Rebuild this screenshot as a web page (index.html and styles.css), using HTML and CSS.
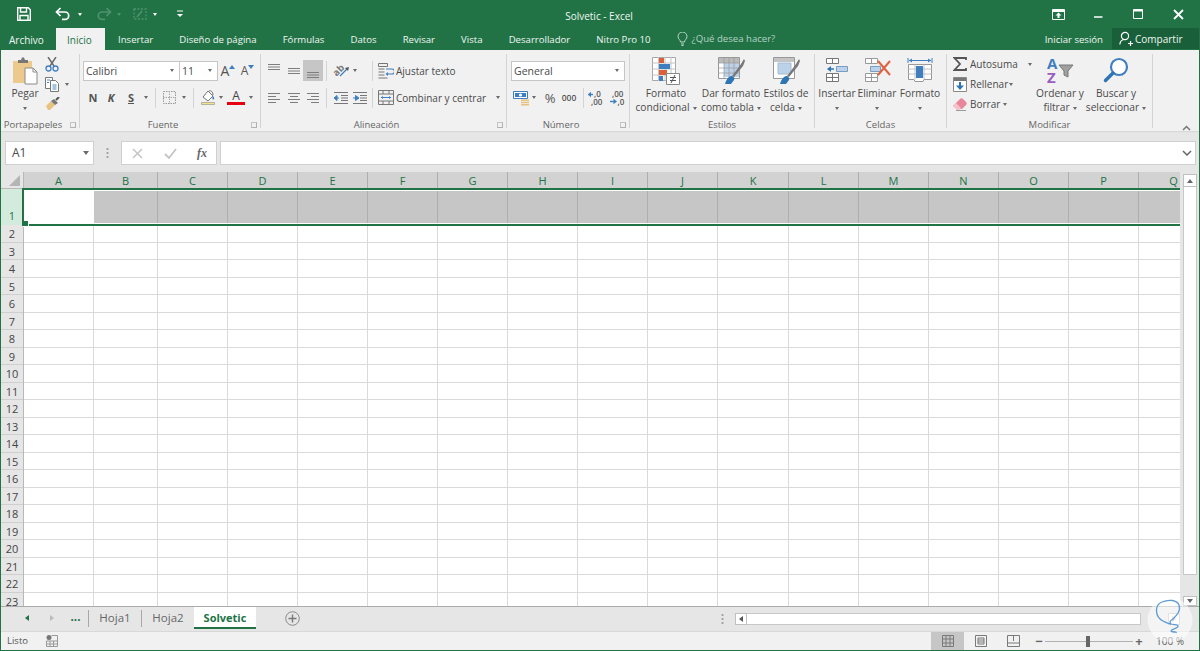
FILE: index.html
```html
<!DOCTYPE html>
<html lang="es">
<head>
<meta charset="utf-8">
<title>Solvetic - Excel</title>
<link rel="stylesheet" href="styles.css">
</head>
<body>
<div class="window">
  <header class="titlebar">
    <div class="qat">
      <span class="q w-save"><svg width="14" height="14" viewBox="0 0 14 14"><path d="M.7.7h10.6l2 2v10.6H.7z" fill="none" stroke="#fff" stroke-width="1.4"/><path d="M3.5 1v4h6V1M3 13V8.5h8V13" fill="none" stroke="#fff" stroke-width="1.4"/></svg></span>
      <span class="q w-undo"><svg width="16" height="14" viewBox="0 0 16 14"><path d="M2 5h8a3.6 3.6 0 0 1 0 7.4H7" fill="none" stroke="#fff" stroke-width="1.7"/><path d="M5.5 1 1.5 5l4 4" fill="none" stroke="#fff" stroke-width="1.7"/></svg></span>
      <span class="q w-drop"><i class="caret white"></i></span>
      <span class="q w-redo"><svg width="16" height="14" viewBox="0 0 16 14"><path d="M14 5H6a3.6 3.6 0 0 0 0 7.4h3" fill="none" stroke="#4f9270" stroke-width="1.7"/><path d="m10.500 1 4 4-4 4" fill="none" stroke="#4f9270" stroke-width="1.7"/></svg></span>
      <span class="q w-drop2"><i class="caret dim"></i></span>
      <span class="q w-touch"><svg width="16" height="14" viewBox="0 0 16 14"><path d="M2 2h12v10H2z" fill="none" stroke="#4f9270" stroke-width="1.3" stroke-dasharray="2 1.500"/><path d="m5 10 5-6" stroke="#4f9270" stroke-width="1.600"/></svg></span>
      <span class="q w-drop3"><i class="caret white"></i></span>
      <span class="q w-cust"><svg width="8" height="8" viewBox="0 0 8 8"><path d="M1 1h6" stroke="#fff"/><path d="M1 4h6L4 7z" fill="#fff"/></svg></span>
    </div>
    <div class="doc-title">Solvetic - Excel</div>
    <div class="winctl">
      <span class="wc wc-ribbon"><svg width="13" height="11" viewBox="0 0 13 11"><path d="M.5.500h12v10H.5z" fill="none" stroke="#fff"/><path d="M.5 2h12" stroke="#fff" stroke-width="2"/><path d="m6.500 3.500 3 3H7.500v2.500h-2V6.500h-2z" fill="#fff"/></svg></span>
      <span class="wc wc-min"><svg width="11" height="11" viewBox="0 0 11 11"><path d="M1 8h8.500" stroke="#fff" stroke-width="1.500"/></svg></span>
      <span class="wc wc-max"><svg width="11" height="11" viewBox="0 0 11 11"><path d="M.5.500h9v9h-9z" fill="none" stroke="#fff"/><path d="M.5 1.500h9" stroke="#fff" stroke-width="2"/></svg></span>
      <span class="wc wc-close"><svg width="11" height="11" viewBox="0 0 11 11"><path d="m1 1 9 9M10 1l-9 9" stroke="#fff" stroke-width="1.800"/></svg></span>
    </div>
  </header>

  <nav class="tabs">
    <span class="tab file">Archivo</span>
    <span class="tab active">Inicio</span>
    <span class="tab">Insertar</span>
    <span class="tab">Diseño de página</span>
    <span class="tab">Fórmulas</span>
    <span class="tab">Datos</span>
    <span class="tab">Revisar</span>
    <span class="tab">Vista</span>
    <span class="tab">Desarrollador</span>
    <span class="tab">Nitro Pro 10</span>
    <span class="tell"><svg width="11" height="14" viewBox="0 0 11 14"><path d="M3.500 10c0-2-2.500-3-2.500-5.500a4.500 4.500 0 0 1 9 0C10 7 7.500 8 7.500 10zM4 12h3M4.500 13.500h2" fill="none" stroke="#bcd6c8"/></svg>¿Qué desea hacer?</span>
    <span class="signin">Iniciar sesión</span>
    <span class="share"><svg width="14" height="15" viewBox="0 0 14 15"><circle cx="6" cy="5" r="3.600" fill="none" stroke="#fff" stroke-width="1.200"/><path d="M.8 13.500c.4-3.500 2.200-5 5-5M9 12.500h5M11.500 10v5" fill="none" stroke="#fff" stroke-width="1.200"/></svg>Compartir</span>
  </nav>

  <section class="ribbon">
    <div class="group g-clip">
      <div class="gbody">
        <div class="big b-paste">
          <span class="bigicon"><svg width="26" height="28" viewBox="0 0 26 28"><path d="M1 4h19v22H1z" fill="#ecc98c"/><path d="M6 3h3l1-2.500h2L13 3h3v3H6z" fill="#777"/><path d="M13 11h8l4 4v12H13z" fill="#fff" stroke="#8a8a8a"/><path d="M21 11v4h4" fill="none" stroke="#8a8a8a"/></svg></span>
          <span class="bt">Pegar</span><span class="bt"><i class="caret"></i></span>
        </div>
        <div class="stack s-clip">
          <span class="srow"><svg width="14" height="15" viewBox="0 0 14 15"><path d="M3 0l6 9M11 0 5 9" stroke="#666" stroke-width="1.400"/><circle cx="3.500" cy="11.500" r="2.500" fill="none" stroke="#3f7fc0" stroke-width="1.300"/><circle cx="10.500" cy="11.500" r="2.500" fill="none" stroke="#3f7fc0" stroke-width="1.300"/></svg></span>
          <span class="srow"><svg width="15" height="15" viewBox="0 0 15 15"><path d="M.5.500h7v11h-7z" fill="#fff" stroke="#777"/><path d="M5.500 3.500h5l3 3v8h-8z" fill="#fff" stroke="#777"/><path d="M2 3h3M2 5.500h2M7.500 8h4M7.500 10h4M7.500 12h4" stroke="#4a86c5"/></svg><i class="caret ml5"></i></span>
          <span class="srow"><svg width="15" height="14" viewBox="0 0 15 14"><path d="m1 9 5-5 4 4-5 5H3z" fill="#e8c27f"/><path d="m6 4 3-2 4 4-3 2z" fill="#777"/><path d="m11 3 3-3" stroke="#555" stroke-width="2"/></svg></span>
        </div>
      </div>
      <div class="glabel">Portapapeles<i class="launch"></i></div>
    </div>

    <div class="group g-font">
      <div class="gbody col">
        <div class="rrow pl3">
          <span class="combo w97">Calibri<i class="caret"></i></span>
          <span class="combo w38">11<i class="caret"></i></span>
          <span class="slot w20 txt-a">A<svg class="tick" width="6" height="4" viewBox="0 0 6 4"><path d="M0 4l3-4 3 4z" fill="#3f7fc0"/></svg></span>
          <span class="slot w19 txt-a small">A<svg class="tick" width="6" height="4" viewBox="0 0 6 4"><path d="M0 0l3 4 3-4z" fill="#3f7fc0"/></svg></span>
        </div>
        <div class="rrow pl4">
          <span class="slot w18 fmt">N</span>
          <span class="slot w18 fmt ital">K</span>
          <span class="slot w22 fmt under">S</span>
          <span class="slot w8"><i class="caret"></i></span>
          <i class="sep ml5"></i>
          <span class="slot w18 ml4"><svg width="13" height="13" viewBox="0 0 13 13"><path d="M.5.500h12v12H.5z" fill="none" stroke="#999" stroke-dasharray="1.500 1"/><path d="M6.500 0v13M0 6.500h13" stroke="#aaa" stroke-dasharray="1.500 1"/></svg></span>
          <span class="slot w12"><i class="caret"></i></span>
          <i class="sep ml3"></i>
          <span class="slot w18 ml5"><svg width="15" height="15" viewBox="0 0 15 15"><path d="m2 7 5-6 5 5-5 5z" fill="#fff" stroke="#777"/><path d="M8 1c2-1 4 1 4 4" fill="none" stroke="#777"/><path d="M12 6c1 1.500 2 3 .500 3.500S11 7 12 6z" fill="#3f7fc0"/><path d="M.5 12.500h13v2H.5z" fill="#f4e38a" stroke="#999" stroke-width=".7"/></svg></span>
          <span class="slot w8"><i class="caret"></i></span>
          <span class="slot w18 ml2 color-a">A</span>
          <span class="slot w12"><i class="caret"></i></span>
        </div>
      </div>
      <div class="glabel">Fuente<i class="launch"></i></div>
    </div>

    <div class="group g-align">
      <div class="gbody col">
        <div class="rrow algrid">
          <span class="slot"><svg class="lines" width="14" height="20" viewBox="0 0 14 20"><path d="M1 3.500h12M1 6h12M1 8.500h12"/></svg></span>
          <span class="slot"><svg class="lines" width="14" height="20" viewBox="0 0 14 20"><path d="M1 7.500h12M1 10h12M1 12.500h12"/></svg></span>
          <span class="slot on"><svg class="lines" width="14" height="20" viewBox="0 0 14 20"><path d="M1 11.500h12M1 14h12M1 16.500h12"/></svg></span>
          <i class="sep sepm"></i>
          <span class="slot orient"><svg class="vis" width="16" height="14" viewBox="0 0 16 14"><text x="-1" y="10" class="orient-t" transform="rotate(-45 4 7)">ab</text><path d="m6 12 7-7" stroke="#3f7fc0" stroke-width="1.200"/><path d="m11 4 4-1-1 4z" fill="#555"/></svg><i class="caret ml3"></i></span>
          <i class="sep"></i>
          <span class="sbtn"><svg width="16" height="16" viewBox="0 0 16 16"><path d="M.5.500h9v3h-9zM.5 6h6M.5 9h6M.5 12h6M.5 15h9" fill="none" stroke="#777"/><path d="M8 6h6a1.500 1.500 0 0 1 0 5H9" fill="none" stroke="#3f7fc0" stroke-width="1.200"/><path d="m10 9-2.500 2 2.500 2z" fill="#3f7fc0"/></svg>Ajustar texto</span>
        </div>
        <div class="rrow algrid">
          <span class="slot"><svg class="lines" width="14" height="12" viewBox="0 0 14 12"><path d="M1 1.500h12M1 4.500h8M1 7.500h12M1 10.500h8"/></svg></span>
          <span class="slot"><svg class="lines" width="14" height="12" viewBox="0 0 14 12"><path d="M1 1.500h12M3 4.500h8M1 7.500h12M3 10.500h8"/></svg></span>
          <span class="slot"><svg class="lines" width="14" height="12" viewBox="0 0 14 12"><path d="M1 1.500h12M5 4.500h8M1 7.500h12M5 10.500h8"/></svg></span>
          <i class="sep sepm"></i>
          <span class="slot orient two">
            <svg width="15" height="12" viewBox="0 0 15 12"><path d="M1 .5h14M8 3.500h7M8 6h7M8 8.500h7M1 11.500h14" stroke="#777" fill="none"/><path d="M6 6H2M4 3.500 1 6l3 2.500z" fill="#3f7fc0" stroke="#3f7fc0"/></svg>
            <svg width="15" height="12" viewBox="0 0 15 12"><path d="M1 .5h14M8 3.500h7M8 6h7M8 8.500h7M1 11.500h14" stroke="#777" fill="none"/><path d="M1 6h4M3.500 3.500 7 6 3.500 8.500z" fill="#3f7fc0" stroke="#3f7fc0"/></svg>
          </span>
          <i class="sep"></i>
          <span class="sbtn"><svg width="16" height="15" viewBox="0 0 16 15"><path d="M.5.500h15v14H.5zM.5 4h15M.5 11h15M5 .500V4M11 .500V4M5 11v3.500M11 11v3.500" fill="none" stroke="#777"/><path d="M3 7.500h10" stroke="#3f7fc0"/><path d="M3 7.500 5 6v3zM13 7.500 11 6v3z" fill="#3f7fc0"/></svg>Combinar y centrar<i class="caret ml8"></i></span>
        </div>
      </div>
      <div class="glabel">Alineación<i class="launch"></i></div>
    </div>

    <div class="group g-num">
      <div class="gbody col">
        <div class="rrow pl4"><span class="combo w114">General<i class="caret"></i></span></div>
        <div class="rrow pl5">
          <span class="slot w18"><svg width="17" height="16" viewBox="0 0 17 16"><path d="M.5 1.500h14v7H.5z" fill="#fff" stroke="#3f7fc0"/><path d="M2 3h11v4H2z" fill="#3f7fc0"/><circle cx="7.500" cy="5" r="1.600" fill="#fff"/><path d="M8 9.500h8v1.500H8zM8 11.700h8v1.500H8zM8 13.900h8v1.500H8z" fill="#e8c27f"/></svg></span>
          <span class="slot w8"><i class="caret"></i></span>
          <span class="slot w18 ml3 pct">%</span>
          <span class="slot w18 ml1 thou">000</span>
          <i class="sep ml5"></i>
          <span class="slot w18 ml3"><svg class="vis" width="18" height="16" viewBox="0 0 18 16"><path d="M6 4.500H1.500" fill="none" stroke="#3f7fc0" stroke-width="1.400"/><path d="M4 1.800.8 4.500 4 7.200z" fill="#3f7fc0"/><text x="7" y="7" class="dec-t">,0</text><text x="4" y="15" class="dec-t">,00</text></svg></span>
          <span class="slot w18 ml3"><svg class="vis" width="18" height="16" viewBox="0 0 18 16"><path d="M2 11.500h5" fill="none" stroke="#3f7fc0" stroke-width="1.400"/><path d="M5.500 8.800 9 11.500l-3.500 2.700z" fill="#3f7fc0"/><text x="4" y="7" class="dec-t">,00</text><text x="9.500" y="15" class="dec-t">,0</text></svg></span>
        </div>
      </div>
      <div class="glabel">Número<i class="launch"></i></div>
    </div>

    <div class="group g-styles">
      <div class="gbody">
        <div class="big b-cond">
          <span class="bigicon"><svg width="28" height="28" viewBox="0 0 28 28"><path d="M.5.500h23v23H.5z" fill="#fff" stroke="#a8a8a8"/><path d="M.5 6h23M.5 12h23M.5 18h23M6.500 0v24M13 0v24M19 0v24" stroke="#c4c4c4"/><path d="M7 1h5v5H7z" fill="#d9603b"/><path d="M7 7h11v5H7z" fill="#3f7fc0"/><path d="M7 13h8v5H7z" fill="#d9603b"/><path d="M7 19h4v5H7z" fill="#3f7fc0"/><path d="M14.500 16.500h13v11h-13z" fill="#fff" stroke="#888"/><path d="M18 20.500h6M18 23.500h6M19 26l4-8" stroke="#555"/></svg></span>
          <span class="bt">Formato</span><span class="bt">condicional<i class="caret ml3"></i></span>
        </div>
        <div class="big b-table">
          <span class="bigicon"><svg width="27" height="28" viewBox="0 0 27 28"><path d="M.5.500h21v21H.5z" fill="#fff" stroke="#999"/><path d="M1 1h20v5H1z" fill="#bbb"/><path d="M6 6h15v14H6z" fill="#bcd2ea"/><path d="M.5 6h21M.5 11h21M.5 16h21M6 0v22M11 0v22M16 0v22" stroke="#9a9a9a" stroke-width=".7"/><path d="m14 19 9-12 3-5 1 2-2 5-9 11z" fill="#777"/><path d="M7 27c1-4 3-7 6-8 2 0 4 2 3 4l-3 4z" fill="#2e75b6"/></svg></span>
          <span class="bt">Dar formato</span><span class="bt">como tabla<i class="caret ml3"></i></span>
        </div>
        <div class="big b-cell">
          <span class="bigicon"><svg width="27" height="28" viewBox="0 0 27 28"><path d="M.5.500h21v21H.5z" fill="#fff" stroke="#999"/><path d="M1 1h20v4H1z" fill="#c4c4c4"/><path d="M5 6h13v11H5z" fill="#bcd2ea" stroke="#a5bcd6"/><path d="m14 19 9-12 3-5 1 2-2 5-9 11z" fill="#777"/><path d="M7 27c1-4 3-7 6-8 2 0 4 2 3 4l-3 4z" fill="#2e75b6"/></svg></span>
          <span class="bt">Estilos de</span><span class="bt">celda<i class="caret ml3"></i></span>
        </div>
      </div>
      <div class="glabel">Estilos</div>
    </div>

    <div class="group g-cells">
      <div class="gbody">
        <div class="big b-ins">
          <span class="bigicon"><svg width="24" height="26" viewBox="0 0 24 26"><path d="M1.500 1.500h12v5h-12zM1.500 16.500h12v8h-12zM1.500 20.500h12M7.500 16.500v8M7.500 1.500v5" fill="#fff" stroke="#777"/><path d="M11.500 9.500h11v5h-11z" fill="#bcd2ea" stroke="#7a9cc0"/><path d="M9 12H3" stroke="#2e75b6" stroke-width="1.500"/><path d="M6 9 2 12l4 3z" fill="#2e75b6"/></svg></span>
          <span class="bt">Insertar</span><span class="bt"><i class="caret"></i></span>
        </div>
        <div class="big b-del">
          <span class="bigicon"><svg width="27" height="26" viewBox="0 0 27 26"><path d="M1.500 1.500h12v5h-12zM1.500 16.500h12v8h-12zM1.500 20.500h12M7.500 16.500v8M7.500 1.500v5" fill="#fff" stroke="#999"/><path d="M6.500 9.500h10v5h-10z" fill="#bcd2ea" stroke="#7a9cc0"/><path d="m14 4 12 14M26 4 14 18" stroke="#e2603a" stroke-width="2"/></svg></span>
          <span class="bt">Eliminar</span><span class="bt"><i class="caret"></i></span>
        </div>
        <div class="big b-form">
          <span class="bigicon"><svg width="26" height="27" viewBox="0 0 26 27"><path d="M1 1v5M25 1v5M2 3.500h22" stroke="#3f7fc0"/><path d="m2 3.500 3-2v4zM24 3.500l-3-2v4z" fill="#3f7fc0"/><path d="M1.500 7.500h23v15H17l-1 2H8l-1-2H1.500z" fill="#fff" stroke="#999"/><path d="M1.500 12h23M1.500 17h23M8 7.500v15M17 7.500v15" stroke="#c0c0c0"/><path d="M9 9h7v12H9z" fill="#3f7fc0"/></svg></span>
          <span class="bt">Formato</span><span class="bt"><i class="caret"></i></span>
        </div>
      </div>
      <div class="glabel">Celdas</div>
    </div>

    <div class="group g-edit">
      <div class="gbody">
        <div class="stack s-edit">
          <span class="srow"><svg width="14" height="14" viewBox="0 0 14 14"><path d="M13 3V1H1.500L7 7l-5.500 6H13v-2" fill="none" stroke="#555" stroke-width="1.800"/></svg><em>Autosuma</em><i class="caret ml10"></i></span>
          <span class="srow"><svg width="14" height="15" viewBox="0 0 14 15"><path d="M.5.500h13v14H.5z" fill="#fff" stroke="#888"/><path d="M1 1h12v3H1z" fill="#777"/><path d="M7 5v5" stroke="#2e75b6" stroke-width="2"/><path d="M3 8.500h8L7 13z" fill="#2e75b6"/></svg><em>Rellenar</em><i class="caret ml1"></i></span>
          <span class="srow"><svg width="14" height="13" viewBox="0 0 14 13"><path d="m0 8 7-7c1-1 2-1 3 0l3 3c1 1 1 2 0 3l-4 4H4z" fill="#e8869a"/><path d="m0 8 3-3 5 5-2 2H4z" fill="#f5c1cb"/><path d="M3 12.500h10" stroke="#999"/></svg><em>Borrar</em><i class="caret ml3"></i></span>
        </div>
        <div class="big b-sort">
          <span class="bigicon"><svg class="vis" width="27" height="27" viewBox="0 0 27 27"><text x="0" y="12" class="az az-a">A</text><text x="0" y="26" class="az az-z">Z</text><path d="M12 8h14l-5 6v6l-4-2v-4z" fill="#a0a0a0" stroke="#777"/></svg></span>
          <span class="bt">Ordenar y</span><span class="bt">filtrar<i class="caret ml3"></i></span>
        </div>
        <div class="big b-find">
          <span class="bigicon"><svg width="26" height="26" viewBox="0 0 26 26"><circle cx="16" cy="10" r="8" fill="#fff" stroke="#3f7fc0" stroke-width="2.200"/><path d="m10 16-7.500 7.500" stroke="#2e75b6" stroke-width="3.500" stroke-linecap="round"/></svg></span>
          <span class="bt">Buscar y</span><span class="bt">seleccionar<i class="caret ml3"></i></span>
        </div>
      </div>
      <div class="glabel">Modificar</div>
    </div>

    <div class="collapse"><svg width="9" height="6" viewBox="0 0 9 6"><path d="m1 5 3.500-3.500L8 5" fill="none" stroke="#777" stroke-width="1.500"/></svg></div>
  </section>

  <section class="formula">
    <div class="namebox">A1<i class="caret big-caret"></i></div>
    <div class="fdots"></div>
    <div class="fbtns">
      <svg width="11" height="11" viewBox="0 0 11 11"><path d="m1 1 9 9M10 1l-9 9" stroke="#c4c4c4" stroke-width="1.500"/></svg>
      <svg width="13" height="11" viewBox="0 0 13 11"><path d="m1 6 4 4 7-9" fill="none" stroke="#c4c4c4" stroke-width="1.800"/></svg>
      <span class="fx">fx</span>
    </div>
    <div class="finput"><svg width="10" height="6" viewBox="0 0 10 6"><path d="m1 1 4 4 4-4" fill="none" stroke="#666" stroke-width="1.500"/></svg></div>
  </section>

  <section class="workarea">
    <div class="sheet">
      <div class="corner"><i></i></div>
      <div class="colheads">
        <span>A</span><span>B</span><span>C</span><span>D</span><span>E</span><span>F</span><span>G</span><span>H</span><span>I</span><span>J</span><span>K</span><span>L</span><span>M</span><span>N</span><span>O</span><span>P</span><span>Q</span>
      </div>
      <div class="rowheads">
        <span class="sel">1</span><span>2</span><span>3</span><span>4</span><span>5</span><span>6</span><span>7</span><span>8</span><span>9</span><span>10</span><span>11</span><span>12</span><span>13</span><span>14</span><span>15</span><span>16</span><span>17</span><span>18</span><span>19</span><span>20</span><span>21</span><span>22</span><span>23</span>
      </div>
      <div class="cells">
        <div class="band">
          <i class="active"></i><i></i><i></i><i></i><i></i><i></i><i></i><i></i><i></i><i></i><i></i><i></i><i></i><i></i><i></i><i></i><i></i>
        </div>
        <div class="rest">
          <i></i><i></i><i></i><i></i><i></i><i></i><i></i><i></i><i></i><i></i><i></i><i></i><i></i><i></i><i></i><i></i><i></i>
        </div>
        <div class="selection"><b></b></div>
      </div>
    </div>
    <div class="vscroll">
      <span class="sb-btn"><i class="tri up"></i></span>
      <span class="sb-thumb"></span>
      <span class="sb-btn low"><i class="tri down"></i></span>
    </div>
  </section>

  <section class="sheetbar">
    <span class="nav g"><i class="tri left"></i></span>
    <span class="nav"><i class="tri right"></i></span>
    <span class="more">...</span>
    <i class="tabsep"></i>
    <span class="stab">Hoja1</span>
    <i class="tabsep"></i>
    <span class="stab">Hoja2</span>
    <span class="stab current">Solvetic</span>
    <span class="addsheet"><svg width="15" height="15" viewBox="0 0 15 15"><circle cx="7.500" cy="7.500" r="6.800" fill="none" stroke="#8a8a8a"/><path d="M7.500 3.500v8M3.500 7.500h8" stroke="#777" stroke-width="1.400"/></svg></span>
    <span class="hsplit"></span>
    <div class="hscroll">
      <span class="hbtn"><i class="tri left dark"></i></span>
      <span class="hthumb"></span>
      <span class="hbtn end"><i class="tri right"></i></span>
    </div>
  </section>

  <footer class="status">
    <span class="ready">Listo</span>
    <svg class="macro" width="12" height="12" viewBox="0 0 12 12"><circle cx="3" cy="2.500" r="2.500" fill="#777"/><path d="M5.500.5h6v11H.5V6h11M4 6v5.500M7.500 6v5.500M.5 9h11" fill="none" stroke="#999"/></svg>
    <div class="views">
      <span class="view on"><svg width="12" height="12" viewBox="0 0 12 12"><path d="M.5.500h11v11H.5zM.5 4h11M.5 8h11M4 .5v11M8 .5v11" fill="none" stroke="#7a7a7a"/></svg></span>
      <span class="view"><svg width="12" height="12" viewBox="0 0 12 12"><path d="M.5.500h11v11H.5zM3 3h6v6H3zM3 5h6M3 7h6" fill="none" stroke="#7a7a7a"/></svg></span>
      <span class="view"><svg width="13" height="12" viewBox="0 0 13 12"><path d="M.5.500h12v11H.5zM6.500.5V6M.5 8h12" fill="none" stroke="#7a7a7a"/></svg></span>
    </div>
    <div class="zoombar">
      <b class="zm">−</b>
      <span class="slider"><i></i></span>
      <b class="zm">+</b>
    </div>
    <span class="pct-label">100 %</span>
  </footer>

  <div class="watermark"><svg width="46" height="46" viewBox="0 0 46 46"><circle cx="23" cy="23" r="22.500" fill="#fff" fill-opacity=".55"/><path d="M16 24C8 20 7 8 15 5c7-3 15-2 17 3 2 6-2 10-6 14-3 2-4 3-2 5 3 1 7 0 7 2 0 3-6 2-7 5 2 2 6 0 5 2" fill="none" stroke="#5f9bd3" stroke-width="1.300"/><path d="M16 24c2 1 5 3 8 3" fill="none" stroke="#5f9bd3" stroke-width="1.300"/></svg></div>
</div>
</body>
</html>
```
FILE: styles.css
```css
* { box-sizing: border-box; }
html, body { margin: 0; padding: 0; }
body { font: 10.2px/14px "Open Sans", "Noto Sans", sans-serif; color: #4a4a4a; overflow: hidden; }
i, em { font-style: normal; }
.vis { overflow: visible; }

.window { position: relative; width: 1200px; height: 651px; border: 1px solid #217346; border-top: 0; background: #e6e6e6; display: flex; flex-direction: column; overflow: hidden; }

/* title bar */
.titlebar { height: 28px; background: #217346; display: grid; grid-template-columns: 1fr auto 1fr; align-items: center; color: #fff; }
.qat { display: flex; align-items: center; padding-left: 16px; }
.q { display: flex; justify-content: center; align-items: center; height: 28px; }
.w-save { width: 14px; margin-right: 24px; }
.w-undo { width: 16px; margin-right: 5px; }
.w-drop { width: 8px; margin-right: 12px; }
.w-redo { width: 16px; margin-right: 3px; }
.w-drop2 { width: 8px; margin-right: 9px; }
.w-touch { width: 16px; margin-right: 3px; }
.w-drop3 { width: 8px; margin-right: 17px; }
.w-cust { width: 8px; }
.doc-title { font-size: 10px; margin-left: -2px; padding-top: 4px; color: #f0f6f2; }
.winctl { display: flex; justify-content: flex-end; align-items: center; padding-right: 1px; }
.wc { display: flex; width: 40px; height: 28px; align-items: center; justify-content: center; }

/* tabs */
.tabs { height: 22px; background: #217346; display: flex; align-items: stretch; color: #f0f6f2; font-size: 9.6px; }
.tab { padding: 1px 13.05px 0; display: flex; align-items: center; white-space: nowrap; }
.tab.file { width: 55px; padding-left: 8px; font-size: 10px; }
.tab.active { width: 49px; padding: 1px 0 0 11px; background: #f1f1f1; color: #217346; font-size: 10px; }
.tell { display: flex; align-items: center; gap: 4px; margin-left: 13px; color: #b4d2c2; }
.signin { margin-left: auto; display: flex; align-items: center; margin-right: 9px; padding-top: 1px; }
.share { width: 87px; background: #19603a; display: flex; align-items: center; gap: 2px; padding-left: 7px; margin-bottom: 1px; font-size: 10px; }

/* ribbon */
.ribbon { height: 81px; background: #f1f1f1; display: flex; padding: 4px 0 3px; box-shadow: 0 1px 1px #d8d8d8; position: relative; }
.group { display: flex; flex-direction: column; border-right: 1px solid #d4d4d4; }
.g-clip { width: 79px; }
.g-font { width: 181px; }
.g-align { width: 246px; }
.g-num { width: 123px; }
.g-styles { width: 185px; }
.g-cells { width: 132px; }
.g-edit { width: 206px; }
.gbody { display: flex; height: 60px; }
.gbody.col { flex-direction: column; padding-top: 3px; }
.glabel { height: 14px; margin-top: auto; margin-bottom: -4px; text-align: center; color: #666; position: relative; font-size: 9.5px; }
.g-clip .glabel, .g-font .glabel, .g-align .glabel, .g-num .glabel { padding-right: 14px; }
.launch { position: absolute; right: 3px; top: 4px; width: 6px; height: 6px; border: 1px solid #b0b0b0; border-top-color: #c4c4c4; border-left-color: #c4c4c4; }

.rrow { height: 27px; display: flex; align-items: center; }
.pl3 { padding-left: 3px; }
.pl4 { padding-left: 4px; }
.pl5 { padding-left: 5px; }
.ml1 { margin-left: 1px; }
.ml2 { margin-left: 2px; }
.ml3 { margin-left: 3px; }
.ml4 { margin-left: 4px; }
.ml5 { margin-left: 5px; }
.ml8 { margin-left: 8px; }
.ml10 { margin-left: 10px; }
.slot { display: flex; align-items: center; justify-content: center; height: 20px; }
.w8 { width: 8px; } .w12 { width: 12px; } .w18 { width: 18px; } .w19 { width: 19px; } .w20 { width: 20px; } .w22 { width: 22px; }
.sep { display: block; width: 1px; height: 20px; background: #d4d4d4; }
.caret { display: inline-block; width: 0; height: 0; border: 2.5px solid transparent; border-top: 3px solid #6a6a6a; border-bottom: 0; vertical-align: middle; }
.caret.white { border-top-color: #fff; }
.caret.dim { border-top-color: #4f9270; }

.combo { height: 20px; background: #fff; border: 1px solid #c6c6c6; display: flex; align-items: center; justify-content: space-between; padding: 0 5px 0 2px; font-size: 10.5px; }
.w97 { width: 97px; }
.w38 { width: 38px; border-left: 0; }
.w114 { width: 114px; }

.txt-a { font-size: 14px; position: relative; color: #555; }
.txt-a.small { font-size: 12px; }
.tick { margin-top: -7px; }
.fmt { font-weight: 700; font-size: 11px; color: #555; }
.ital { font-style: italic; }
.under { text-decoration: underline; }
.color-a { font-size: 12px; color: #444; border-bottom: 3px solid #e60012; height: 15px; }

.algrid { display: grid; grid-template-columns: 20px 19px 20px 1px 48px 1px auto; padding-left: 3px; }
.lines { stroke: #7d7d7d; fill: none; }
.slot.on { background: #c6c6c6; height: 21px; }
.sepm { transform: translateX(3px); }
.orient { padding-right: 6px; }
.orient.two { gap: 4px; padding: 0 0 0 3px; }
.orient-t { font-size: 9.5px; font-weight: 700; fill: #777; }
.sbtn { display: flex; align-items: center; gap: 2px; padding-left: 5px; white-space: nowrap; font-size: 10px; }
.pct { font-size: 13px; color: #555; }
.thou { font-size: 8.5px; font-weight: 600; color: #555; }
.dec-t { font-size: 8px; font-weight: 600; fill: #555; }

.big { display: flex; flex-direction: column; align-items: center; padding-top: 3px; white-space: nowrap; }
.bigicon { display: flex; align-items: flex-start; justify-content: center; height: 29px; }
.bt { height: 14px; display: block; line-height: 14px; }
.b-paste { width: 48px; }
.b-cond { width: 72px; }
.b-table { width: 58px; }
.b-cell { width: 52px; }
.b-ins { width: 44px; }
.b-del { width: 36px; }
.b-form { width: 50px; }
.b-sort { width: 48px; }
.b-find { width: 64px; }
.az { font-size: 15px; font-weight: 700; }
.az-a { fill: #3f7fc0; }
.az-z { fill: #9a5cc0; }

.stack { display: flex; flex-direction: column; }
.srow { height: 20px; display: flex; align-items: center; white-space: nowrap; }
.s-clip { width: 30px; margin-left: -4px; }
.s-edit { width: 89px; padding-left: 6px; font-size: 10px; }
.s-edit em { margin-left: 3px; }
.collapse { position: absolute; left: 1181px; top: 70px; }

/* formula bar */
.formula { height: 41px; padding: 10px 3px 7px 4px; display: flex; align-items: stretch; }
.namebox { width: 89px; background: #fff; border: 1px solid #d0d0d0; display: flex; align-items: center; justify-content: space-between; padding: 0 4px 0 6px; font-size: 12px; }
.big-caret { border-width: 3px; border-top-width: 4px; border-bottom: 0; }
.fdots { width: 26px; margin: 5px 0; background: radial-gradient(circle, #a0a0a0 1px, transparent 1.2px) center/3px 4px repeat-y; }
.fbtns { width: 96px; margin-left: 1px; background: #fff; border: 1px solid #d0d0d0; display: flex; align-items: center; justify-content: space-between; padding: 0 9px 0 10px; }
.fx { font: italic 700 12px "Liberation Serif", serif; color: #666; }
.finput { flex: 1; margin-left: 3px; background: #fff; border: 1px solid #d0d0d0; display: flex; align-items: center; justify-content: flex-end; padding-right: 3px; }

/* sheet */
.workarea { height: 434px; display: flex; }
.sheet { --cols: 70px 64px 70px 70px 70px 70px 70px 70px 70px 70px 71px 70px 70px 70px 70px 70px 70px; width: 1179px; display: grid; grid-template-columns: 23px 1fr; grid-template-rows: 17px 1fr; overflow: hidden; background: #fff; font-size: 11px; }
.corner { background: #e6e6e6; border-right: 1px solid #b8b8b8; border-bottom: 1px solid #b8b8b8; display: flex; align-items: flex-end; justify-content: flex-end; padding: 0 3px 2px 0; }
.corner i { width: 0; height: 0; border-left: 11px solid transparent; border-bottom: 11px solid #b5b5b5; }
.colheads { display: grid; grid-template-columns: var(--cols); background: #d2d2d2; color: #217346; }
.colheads span { text-align: center; line-height: 17px; border-right: 1px solid #adadad; }
.rowheads { display: grid; grid-template-rows: 36px repeat(22, 17.5px); background: #e6e6e6; border-right: 1px solid #b8b8b8; height: 417px; overflow: hidden; align-content: start; }
.rowheads span { text-align: center; border-bottom: 1px solid #cfcfcf; line-height: 17px; color: #444; }
.rowheads .sel { background: #d3ebdd; color: #217346; padding-top: 18px; border-bottom: 0; }
.cells { position: relative; }
.band { display: grid; grid-template-columns: var(--cols); height: 36px; background: #c6c6c6; }
.band i { border-right: 1px solid #aeaeae; }
.band .active { background: #fff; border-right: 0; }
.rest { display: grid; grid-template-columns: var(--cols); height: 385px; background: repeating-linear-gradient(to bottom, #fff 0, #fff 17px, #dadada 17px, #dadada 18px, #fff 18px, #fff 34px, #dadada 34px, #dadada 35px); }
.rest i { border-right: 1px solid #dadada; }
.selection { position: absolute; left: -2px; top: -1px; width: 1300px; height: 38px; border: 2px solid #217346; box-shadow: inset 0 0 0 1px #fff; }
.selection b { position: absolute; left: -1px; bottom: -3px; width: 6px; height: 6px; background: #217346; border: 1px solid #fff; border-width: 0 1px 1px 0; }

.vscroll { flex: 1; padding: 2px 2px 0 3px; display: flex; flex-direction: column; }
.sb-btn { height: 13px; background: #fff; border: 1px solid #c0c0c0; display: flex; align-items: center; justify-content: center; }
.sb-btn.low { margin-top: 21px; height: 10px; }
.sb-thumb { height: 388px; background: #fff; border: 1px solid #c8c8c8; border-top: 0; }
.tri { display: block; width: 0; height: 0; border: 3px solid transparent; }
.tri.up { border-top: 0; border-bottom: 4px solid #666; }
.tri.down { border-bottom: 0; border-top: 4px solid #666; }
.tri.left { border-left: 0; border-right: 4px solid #999; }
.tri.right { border-right: 0; border-left: 4px solid #bbb; }
.tri.dark { border-right-color: #555; }

/* sheet tabs */
.sheetbar { height: 25px; border-top: 1px solid #ababab; display: flex; align-items: flex-start; background: #e6e6e6; font-size: 11.5px; color: #666; }
.nav { width: 25px; height: 22px; display: flex; align-items: center; justify-content: center; }
.nav.g { margin-left: 13px; }
.nav.g .tri.left { border-right-color: #217346; }
.more { width: 25px; height: 22px; line-height: 20px; text-align: center; font-weight: 700; color: #217346; margin-left: -1px; }
.tabsep { width: 1px; height: 17px; margin-top: 3px; background: #a8a8a8; }
.stab { width: 52px; height: 22px; line-height: 22px; text-align: center; }
.stab.current { width: 62px; background: #fff; border-bottom: 2px solid #217346; color: #217346; font-weight: 700; font-size: 11px; }
.addsheet { margin: 4px 0 0 29px; height: 15px; display: flex; }
.hsplit { width: 3px; height: 10px; margin: 7px 0 0 421px; background: radial-gradient(circle, #a0a0a0 1px, transparent 1.2px) center/3px 4px repeat-y; }
.hscroll { display: flex; margin: 6px 0 0 11px; height: 12px; width: 445px; }
.hbtn { width: 12px; background: #fff; border: 1px solid #c0c0c0; display: flex; align-items: center; justify-content: center; }
.hthumb { width: 394px; background: #fff; border: 1px solid #c8c8c8; border-left: 0; }
.hbtn.end { margin-left: 27px; }

/* status */
.status { flex: 1; background: #f1f1f1; border-top: 1px solid #d8d8d8; display: flex; align-items: center; font-size: 10px; color: #555; }
.ready { width: 44px; padding-left: 6px; font-size: 9.5px; }
.macro { margin-left: 1px; }
.views { display: flex; margin-left: 873px; align-self: stretch; }
.view { width: 33px; display: flex; align-items: center; justify-content: center; }
.view.on { background: #c6c6c6; }
.zoombar { display: flex; align-items: center; margin-left: 4px; }
.zm { width: 10px; font-size: 13px; font-weight: 700; color: #666; text-align: center; line-height: 14px; }
.slider { position: relative; width: 88px; height: 1px; margin: 0 1px; background: #b0b0b0; display: block; }
.slider i { position: absolute; left: 41px; top: -5px; width: 4px; height: 11px; background: #666; }
.pct-label { margin-left: 12px; white-space: nowrap; }

.watermark { position: absolute; left: 1146px; top: 597px; width: 46px; height: 46px; }
```
